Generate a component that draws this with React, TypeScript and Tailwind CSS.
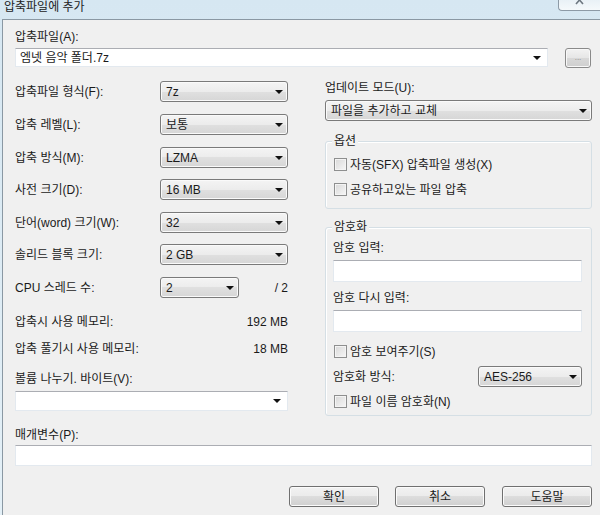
import React from "react";

const Arrow = () => (
  <div className="h-0 w-0 border-l-[4px] border-r-[4px] border-t-[4px] border-l-transparent border-r-transparent border-t-[#111]" />
);

function Select({ value, cls }: { value: string; cls: string }) {
  return (
    <div
      className={`flex h-[21px] items-center justify-between rounded-[3px] border border-[#7a7a7a] bg-[linear-gradient(#f4f4f4,#ececec_50%,#e0e0e0_50%,#d6d6d6)] pl-[5px] pr-[4px] shadow-[inset_0_0_0_1px_#fafafa] ${cls}`}
    >
      <span className="leading-none">{value}</span>
      <Arrow />
    </div>
  );
}

function Combo({ value, cls }: { value: string; cls: string }) {
  return (
    <div
      className={`flex items-center justify-between border border-[#e3e9ef] border-t-[#abadb3] bg-white pl-[4px] pr-[6px] ${cls}`}
    >
      <span className="leading-none">{value}</span>
      <Arrow />
    </div>
  );
}

function Check({ label }: { label: string }) {
  return (
    <div className="flex h-[13px] items-center">
      <div className="h-[13px] w-[13px] border border-[#8e8f8f] bg-[linear-gradient(135deg,#d8d8d8,#f7f7f7)] shadow-[inset_0_0_0_1px_#f4f4f4]" />
      <span className="ml-[3px] leading-none">{label}</span>
    </div>
  );
}

function Row({ label, children, mt }: { label: string; children: React.ReactNode; mt: string }) {
  return (
    <div className={`flex h-[21px] items-center ${mt}`}>
      <span className="w-[145px] leading-none">{label}</span>
      {children}
    </div>
  );
}

function Button({ label, cls }: { label: string; cls: string }) {
  return (
    <div
      className={`flex h-[21px] w-[90px] items-center justify-center rounded-[3px] border border-[#707070] bg-[linear-gradient(#f2f2f2,#ebebeb_50%,#dddddd_50%,#cfcfcf)] shadow-[inset_0_0_0_1px_#fbfbfb] ${cls}`}
    >
      <span className="leading-none">{label}</span>
    </div>
  );
}

export default function App() {
  return (
    <div className="h-[515px] w-[600px] overflow-hidden bg-[linear-gradient(180deg,#d6e7f2,#e4f0f7)] text-[12px] text-[#1a1a1a] [font-family:'Liberation_Sans','Noto_Sans_CJK_KR',sans-serif]">
      {/* Title bar */}
      <div className="flex h-[19px] items-start justify-between">
        <span className="ml-[4px] mt-[0px] text-[12px] leading-[14px] text-[#222]">압축파일에 추가</span>
        <div className="flex h-[11px] w-[42px] items-end justify-center rounded-bl-[4px] border-b border-l border-[#8d9aa6] bg-[linear-gradient(#e9f1f6,#f5f9fb)] pb-[4px]">
          <svg width="10" height="8" viewBox="0 0 10 8">
            <path d="M1 -2 L8 6 M8 -2 L1 6" stroke="#6d7780" strokeWidth="1.6" fill="none" />
          </svg>
        </div>
      </div>

      {/* Client area */}
      <div className="ml-[2px] h-[496px] border-l border-t border-[#8a98a3] bg-[#f0f0f0] pl-[12px]">
        <div className="w-[577px]">
          <div className="mt-[10px] h-[14px] leading-[14px]">압축파일(A):</div>
          <div className="mt-[4px] flex items-start">
            <Combo value="엠넷 음악 폴더.7z" cls="h-[19px] w-[533px]" />
            <div className="ml-[17px] flex h-[20px] w-[26px] items-center justify-center rounded-[3px] border border-[#8a8a8a] bg-[linear-gradient(#f2f2f2,#e6e6e6_50%,#d8d8d8_50%,#cfcfcf)] shadow-[inset_0_0_0_1px_#f8f8f8]">
              <span className="text-[8px] leading-none text-[#888]">...</span>
            </div>
          </div>

          <div className="mt-[13px] flex items-start">
            {/* Left column */}
            <div className="w-[273px]">
              <Row label="압축파일 형식(F):" mt="">
                <Select value="7z" cls="w-[128px]" />
              </Row>
              <Row label="압축 레벨(L):" mt="mt-[12px]">
                <Select value="보통" cls="w-[128px]" />
              </Row>
              <Row label="압축 방식(M):" mt="mt-[12px]">
                <Select value="LZMA" cls="w-[128px]" />
              </Row>
              <Row label="사전 크기(D):" mt="mt-[11px]">
                <Select value="16 MB" cls="w-[128px]" />
              </Row>
              <Row label="단어(word) 크기(W):" mt="mt-[12px]">
                <Select value="32" cls="w-[128px]" />
              </Row>
              <Row label="솔리드 블록 크기:" mt="mt-[11px]">
                <Select value="2 GB" cls="w-[128px]" />
              </Row>
              <Row label="CPU 스레드 수:" mt="mt-[12px]">
                <Select value="2" cls="w-[79px]" />
                <span className="ml-auto leading-none">/ 2</span>
              </Row>
              <div className="mt-[17px] flex h-[14px] items-center justify-between leading-none">
                <span>압축시 사용 메모리:</span>
                <span>192 MB</span>
              </div>
              <div className="mt-[13px] flex h-[14px] items-center justify-between leading-none">
                <span>압축 풀기시 사용 메모리:</span>
                <span>18 MB</span>
              </div>
              <div className="mt-[16px] h-[14px] leading-[14px]">볼륨 나누기. 바이트(V):</div>
              <Combo value="" cls="mt-[5px] h-[20px] w-[273px]" />
            </div>

            {/* Right column */}
            <div className="ml-[37px] w-[267px]">
              <div className="h-[14px] leading-[14px]">업데이트 모드(U):</div>
              <Select value="파일을 추가하고 교체" cls="mt-[5px] w-[267px]" />

              <div className="relative mt-[20px] h-[68px] rounded-[3px] border border-[#d5dfe5] pl-[8px] pt-[16px] shadow-[inset_1px_1px_0_#fff]">
                <span className="absolute left-[6px] top-[-8px] bg-[#f0f0f0] px-[2px] leading-[14px]">옵션</span>
                <Check label="자동(SFX) 압축파일 생성(X)" />
                <div className="mt-[12px]">
                  <Check label="공유하고있는 파일 압축" />
                </div>
              </div>

              <div className="relative mt-[18px] h-[189px] rounded-[3px] border border-[#d5dfe5] pl-[7px] pr-[9px] pt-[13px] shadow-[inset_1px_1px_0_#fff]">
                <span className="absolute left-[6px] top-[-8px] bg-[#f0f0f0] px-[2px] leading-[14px]">암호화</span>
                <div className="h-[14px] leading-[14px]">암호 입력:</div>
                <div className="mt-[5px] h-[22px] border border-[#e3e9ef] border-t-[#abadb3] bg-white" />
                <div className="mt-[9px] h-[14px] leading-[14px]">암호 다시 입력:</div>
                <div className="mt-[5px] h-[22px] border border-[#e3e9ef] border-t-[#abadb3] bg-white" />
                <div className="mt-[13px] pl-[1px]">
                  <Check label="암호 보여주기(S)" />
                </div>
                <div className="mt-[8px] flex h-[21px] items-center justify-between">
                  <span className="leading-none">암호화 방식:</span>
                  <Select value="AES-256" cls="w-[104px]" />
                </div>
                <div className="mt-[8px] pl-[1px]">
                  <Check label="파일 이름 암호화(N)" />
                </div>
              </div>
            </div>
          </div>

          <div className="mt-[12px] h-[14px] leading-[14px]">매개변수(P):</div>
          <div className="mt-[3px] h-[21px] w-[577px] border border-[#e3e9ef] border-t-[#abadb3] bg-white" />

          <div className="mt-[20px] flex justify-end">
            <Button label="확인" cls="" />
            <Button label="취소" cls="ml-[16px]" />
            <Button label="도움말" cls="ml-[17px]" />
          </div>
        </div>
      </div>
    </div>
  );
}
